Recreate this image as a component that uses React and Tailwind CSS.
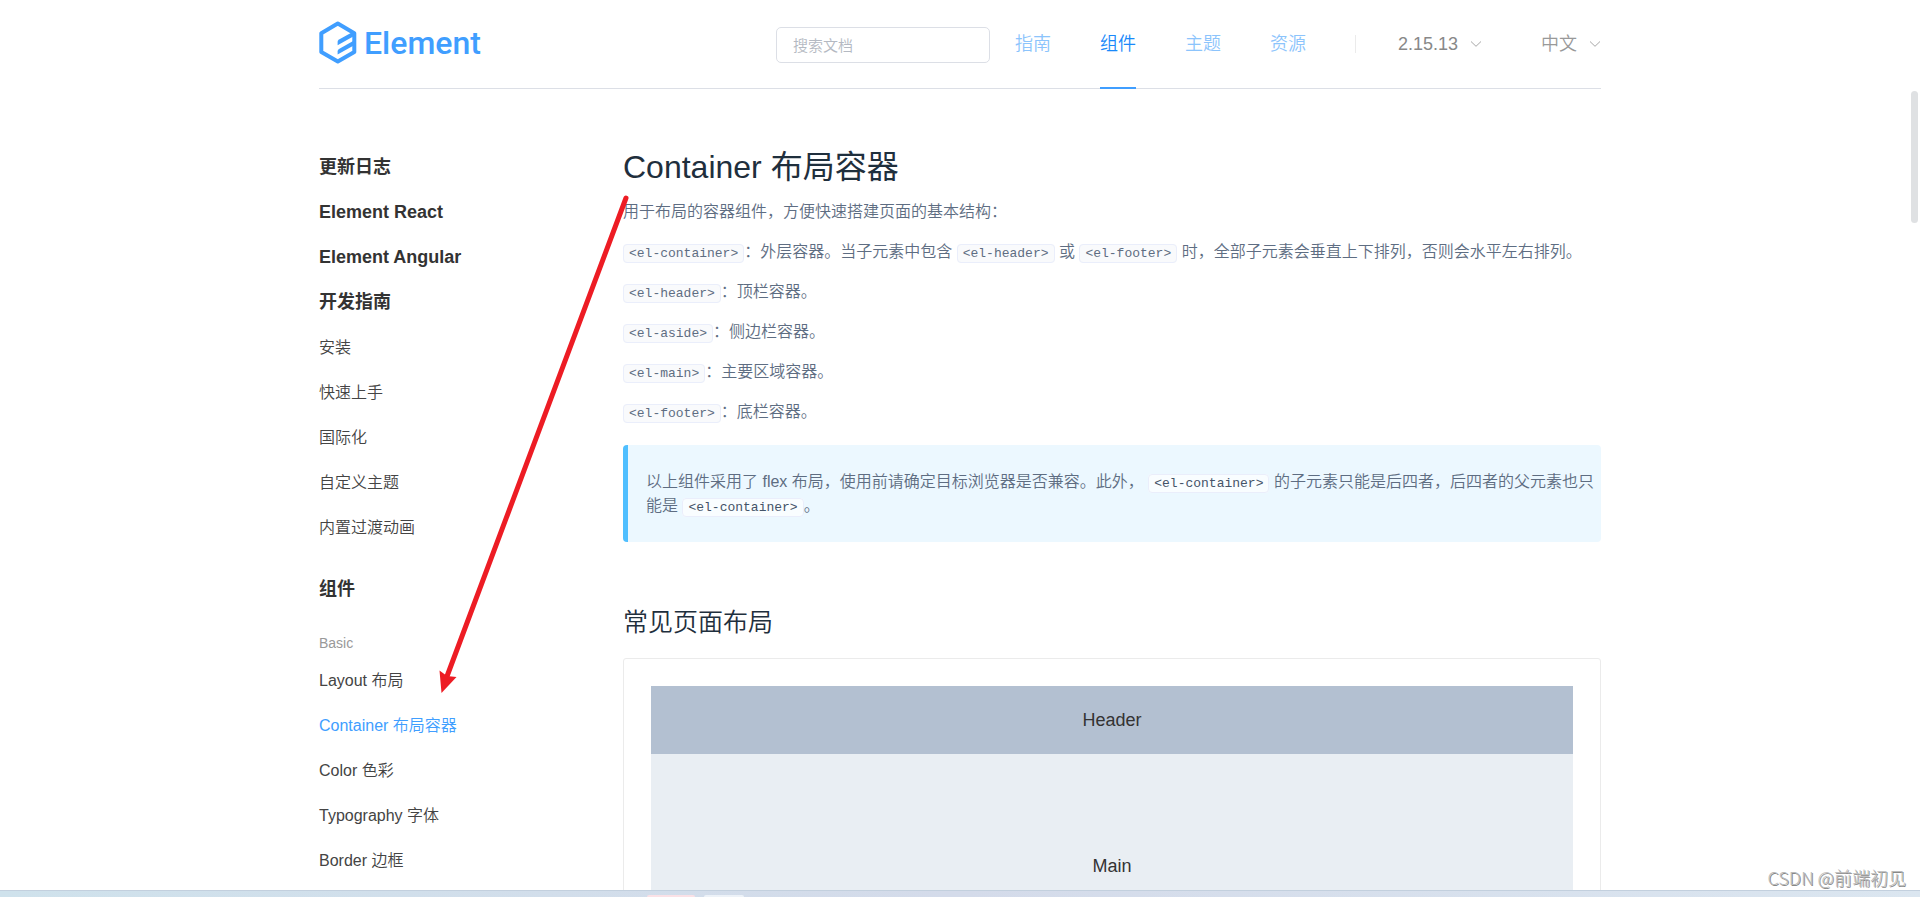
const NAV = [
  { label: '指南' },
  { label: '组件', active: true },
  { label: '主题' },
  { label: '资源' },
];

const GUIDES = ['安装', '快速上手', '国际化', '自定义主题', '内置过渡动画'];
const COMPONENTS = ['Layout 布局', 'Container 布局容器', 'Color 色彩', 'Typography 字体', 'Border 边框'];
const CURRENT = 'Container 布局容器';

const PARTS = [
  ['<el-header>', '顶栏容器。'],
  ['<el-aside>', '侧边栏容器。'],
  ['<el-main>', '主要区域容器。'],
  ['<el-footer>', '底栏容器。'],
];

function Code({ children, onNote }) {
  return (
    <code
      className={
        'rounded-[4px] border border-[#eaeefb] px-[5px] py-px font-["Liberation_Mono","Noto_Sans_CJK_SC",monospace] text-[13px] leading-4 ' +
        (onNote ? 'bg-white/70 text-[#445368]' : 'bg-[#f9fafc] text-[#5e6d82]')
      }
    >
      {children}
    </code>
  );
}

function Logo() {
  return (
    <a href="#home" className="flex items-center gap-[7px] text-[#409eff]">
      <svg width="38" height="44" viewBox="0 0 38 44" fill="currentColor" aria-hidden="true">
        <path
          d="M18.8 2.6 L35.3 12.2 V31 L18.8 40.6 L2.3 31 V12.2 Z"
          fill="none"
          stroke="currentColor"
          strokeWidth="4"
          strokeLinejoin="round"
        />
        <path d="M34.5 10.4 L20 18.6 Q18.6 19.5 18.6 21 V24.2 L36 14.4 Z" />
        <path d="M35 19.4 L20 28 Q18.6 28.9 18.6 30.4 V33.6 L36 23.8 Z" />
      </svg>
      <span className="font-[Roboto,sans-serif] text-[32px] leading-9 font-medium">Element</span>
    </a>
  );
}

function Picker({ label, value, className }) {
  return (
    <div className={'flex items-center gap-3 ' + className}>
      <select
        aria-label={label}
        className="h-8 appearance-none bg-transparent text-lg leading-8 outline-none [field-sizing:content]"
      >
        <option>{value}</option>
      </select>
      <svg width="12" height="8" viewBox="0 0 12 8" fill="none" stroke="#a8a8a8" aria-hidden="true">
        <path d="M1 1.5 L6 6.3 L11 1.5" />
      </svg>
    </div>
  );
}

function Header() {
  return (
    <header className="flex h-[89px] shrink-0 items-stretch border-b border-[#dcdfe6]">
      <div className="-mt-0.5 flex items-center">
        <Logo />
      </div>
      <div className="ml-auto flex items-center pt-0.5">
        <input
          type="text"
          aria-label="搜索文档"
          placeholder="搜索文档"
          className="h-9 w-[214px] rounded-[5px] border border-[#dcdfe6] px-4 text-[15px] font-[350] outline-none placeholder:text-[#b4b9c2]"
        />
      </div>
      <nav className="ml-[25px] flex gap-[49px]">
        {NAV.map((item) => (
          <a
            key={item.label}
            href="#nav"
            className={
              '-mb-px flex w-9 items-center justify-center border-b-2 text-lg font-[350] ' +
              (item.active ? 'border-[#409eff] text-[#1989fa]' : 'border-transparent text-[#8cc4fc]')
            }
          >
            {item.label}
          </a>
        ))}
      </nav>
      <div className="ml-[49px] h-[18px] w-px self-center bg-[#ebebeb]" />
      <Picker label="版本" value="2.15.13" className="ml-[42px] text-[#888888]" />
      <Picker label="语言" value="中文" className="ml-[59px] font-[350] text-[#999999]" />
    </header>
  );
}

function Sidebar() {
  const group = 'block h-[45px] text-lg leading-[45px] font-bold text-[#333333]';
  return (
    <aside className="w-[304px] shrink-0 pt-[56px]">
      <a href="#changelog" className={group}>更新日志</a>
      <a href="#react" className={group}>Element React</a>
      <a href="#angular" className={group}>Element Angular</a>
      <h2 className={group}>开发指南</h2>
      <ul>
        {GUIDES.map((name) => (
          <li key={name}>
            <a href="#guide" className="block h-[45px] text-base leading-[45px] font-[350] text-[#444444]">{name}</a>
          </li>
        ))}
      </ul>
      <h2 className={group + ' mt-[17px]'}>组件</h2>
      <h3 className="mt-4 text-sm leading-[30px] text-[#999999]">Basic</h3>
      <ul>
        {COMPONENTS.map((name) => (
          <li key={name}>
            <a
              href="#component"
              className={
                'block h-[45px] text-base leading-[45px] font-[350] ' +
                (name === CURRENT ? 'text-[#409eff]' : 'text-[#444444]')
              }
            >
              {name}
            </a>
          </li>
        ))}
      </ul>
    </aside>
  );
}

function Content() {
  return (
    <main className="min-w-0 flex-1 pt-[58px] text-base leading-6 font-[350] text-[#5e6d82]">
      <h1 className="mb-[13px] text-[32px] leading-10 font-normal text-[#1f2f3d]">Container 布局容器</h1>
      <p className="mb-4">用于布局的容器组件，方便快速搭建页面的基本结构：</p>
      <p className="mb-4">
        <Code>{'<el-container>'}</Code>：外层容器。当子元素中包含 <Code>{'<el-header>'}</Code> 或{' '}
        <Code>{'<el-footer>'}</Code> 时，全部子元素会垂直上下排列，否则会水平左右排列。
      </p>
      {PARTS.map(([tag, text]) => (
        <p key={tag} className="mb-4">
          <Code>{tag}</Code>：{text}
        </p>
      ))}
      <div className="mt-[21px] rounded-[4px] border-l-[5px] border-[#50bfff] bg-[#ecf8ff] pt-[25px] pb-6 pl-[18px]">
        <p>
          以上组件采用了 flex 布局，使用前请确定目标浏览器是否兼容。此外， <Code onNote>{'<el-container>'}</Code>{' '}
          的子元素只能是后四者，后四者的父元素也只能是 <Code onNote>{'<el-container>'}</Code>。
        </p>
      </div>
      <h2 className="mt-[62px] mb-[18px] text-[25px] leading-9 text-[#1f2f3d]">常见页面布局</h2>
      <div className="rounded-[3px] border border-[#ebebeb] p-[27px] text-center text-lg font-normal text-[#333333]">
        <div className="bg-[#b3c0d1] leading-[68px]">Header</div>
        <div className="bg-[#e9eef3] leading-[225px]">Main</div>
      </div>
    </main>
  );
}

export default function App() {
  return (
    <div className='relative flex h-screen flex-col overflow-hidden bg-white font-["Liberation_Sans","Noto_Sans_CJK_SC",sans-serif]'>
      <div className="min-h-0 flex-1 overflow-hidden">
        <div className="mx-auto w-full max-w-[1282px]">
          <Header />
          <div className="flex">
            <Sidebar />
            <Content />
          </div>
        </div>
      </div>

      <div className="flex h-[7px] shrink-0 items-end gap-[9px] border-t border-[#c3d0de] bg-linear-to-r from-[#cfe2ec] via-[#d4dbea] to-[#dbe6f0] pl-[647px]">
        <div className="h-[2px] w-12 rounded-t-sm bg-[#fbe1e6]" />
        <div className="h-[2px] w-10 rounded-t-sm bg-[#edf2f8]" />
      </div>

      <div className="absolute top-[91px] right-[2px] h-[132px] w-[7px] rounded-full bg-[#dfe1e3]" />

      <svg
        className="pointer-events-none absolute top-[190px] left-1/2 -ml-[530px]"
        width="210"
        height="510"
        viewBox="430 190 210 510"
        fill="#ed1c24"
        aria-hidden="true"
      >
        <path d="M626 198 L446 679" stroke="#ed1c24" strokeWidth="5" strokeLinecap="round" />
        <path d="M441.5 693 L439.5 670.5 L447 676 L456.5 677 Z" />
      </svg>

      <div className='absolute right-[14px] bottom-2 font-["Noto_Sans_CJK_SC",sans-serif] text-lg leading-6 font-light text-[#bbbbbb] [text-shadow:1px_1px_0_#888888]'>
        CSDN @前端初见
      </div>
    </div>
  );
}
